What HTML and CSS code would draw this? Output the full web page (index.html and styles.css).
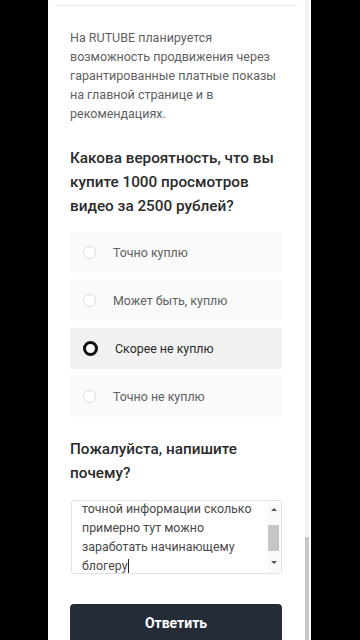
FILE: index.html
```html
<!DOCTYPE html>
<html lang="ru">
<head>
<meta charset="utf-8">
<link rel="stylesheet" href="styles.css">
</head>
<body>
<div class="panel">
  <div class="topline"></div>
  <p class="intro">На RUTUBE планируется возможность продвижения через гарантированные платные показы на главной странице и в рекомендациях.</p>
  <h2 class="question">Какова вероятность, что вы купите 1000 просмотров видео за 2500 рублей?</h2>
  <div class="options">
    <div class="option"><span class="radio"></span><span class="label">Точно куплю</span></div>
    <div class="option"><span class="radio"></span><span class="label">Может быть, куплю</span></div>
    <div class="option selected"><span class="radio"></span><span class="label">Скорее не куплю</span></div>
    <div class="option"><span class="radio"></span><span class="label">Точно не куплю</span></div>
  </div>
  <h2 class="question q2">Пожалуйста, напишите почему?</h2>
  <div class="textarea">
    <div class="ta-text">точной информации сколько<br>примерно тут можно<br>заработать начинающему<br>блогеру<span class="caret"></span></div>
    <div class="ta-scroll">
      <span class="arrow up"></span>
      <span class="ta-thumb"></span>
      <span class="arrow down"></span>
    </div>
  </div>
  <button class="submit">Ответить</button>
  <div class="page-scroll"><span class="page-thumb"></span></div>
</div>
</body>
</html>
```
FILE: styles.css
```css
html, body {
  margin: 0;
  padding: 0;
  background: #000;
  height: 640px;
  overflow: hidden;
}
body {
  font-family: Roboto, "Liberation Sans", sans-serif;
}
.panel {
  position: relative;
  margin-left: 48px;
  width: 263px;
  height: 640px;
  background: #fff;
  box-sizing: border-box;
  padding: 0 29px 0 22px;
  overflow: hidden;
}
.topline {
  height: 1px;
  background: #ececec;
  margin: 0 -15px 0 -15px;
  position: relative;
  top: 5px;
}
.intro {
  margin: 27px 0 0;
  font-size: 12.5px;
  line-height: 19px;
  color: #5f5f5f;
}
.question {
  margin: 23px 0 0;
  font-size: 15.3px;
  line-height: 24px;
  font-weight: 500;
  color: #2b2b2b;
}
.options {
  margin-top: 14px;
  display: flex;
  flex-direction: column;
  gap: 7px;
}
.option {
  height: 41px;
  background: #fafafa;
  display: flex;
  align-items: center;
  padding-left: 13px;
  border-radius: 2px;
}
.option .radio {
  width: 11px;
  height: 11px;
  border: 1.6px solid #dcdcdc;
  border-radius: 50%;
  background: #fff;
  flex: none;
}
.option .label {
  margin-left: 17px;
  font-size: 12.4px;
  color: #606060;
}
.option.selected {
  background: #f1f1f1;
}
.option.selected .radio {
  width: 9px;
  height: 9px;
  border: 3px solid #111;
}
.option.selected .label {
  color: #2a2a2a;
}
.q2 {
  margin-top: 20px;
}
.textarea {
  position: relative;
  margin: 15px 0 0 1px;
  height: 74px;
  border: 1px solid #e2e2e2;
  border-radius: 3px;
  box-sizing: border-box;
  overflow: hidden;
  background: #fff;
}
.ta-text {
  margin-top: -2px;
  padding-left: 10px;
  font-size: 12.4px;
  line-height: 19px;
  color: #4a4a4a;
}
.caret {
  display: inline-block;
  width: 1px;
  height: 14px;
  background: #222;
  vertical-align: -3px;
}
.ta-scroll {
  position: absolute;
  right: 1px;
  top: 0;
  bottom: 0;
  width: 13px;
  background: #fafafa;
  display: flex;
  flex-direction: column;
  align-items: center;
}
.arrow {
  width: 0;
  height: 0;
  border-left: 3px solid transparent;
  border-right: 3px solid transparent;
}
.arrow.up {
  margin-top: 7px;
  border-bottom: 3px solid #555;
}
.arrow.down {
  margin-top: 10px;
  border-top: 3px solid #555;
}
.ta-thumb {
  margin-top: 14px;
  width: 11px;
  height: 26px;
  background: #c6c6c6;
}
.submit {
  display: block;
  margin-top: 30px;
  width: 212px;
  height: 44px;
  border: none;
  border-radius: 4px;
  background: #252c38;
  color: #fff;
  font-family: Roboto, "Liberation Sans", sans-serif;
  font-size: 14px;
  font-weight: 700;
  padding: 0 0 6px;
}
.page-scroll {
  position: absolute;
  right: 2px;
  top: 0;
  bottom: 0;
  width: 4px;
  background: #f3f3f3;
}
.page-thumb {
  position: absolute;
  left: 0;
  right: 0;
  top: 537px;
  bottom: 0;
  background: #c8c8c8;
}
```
